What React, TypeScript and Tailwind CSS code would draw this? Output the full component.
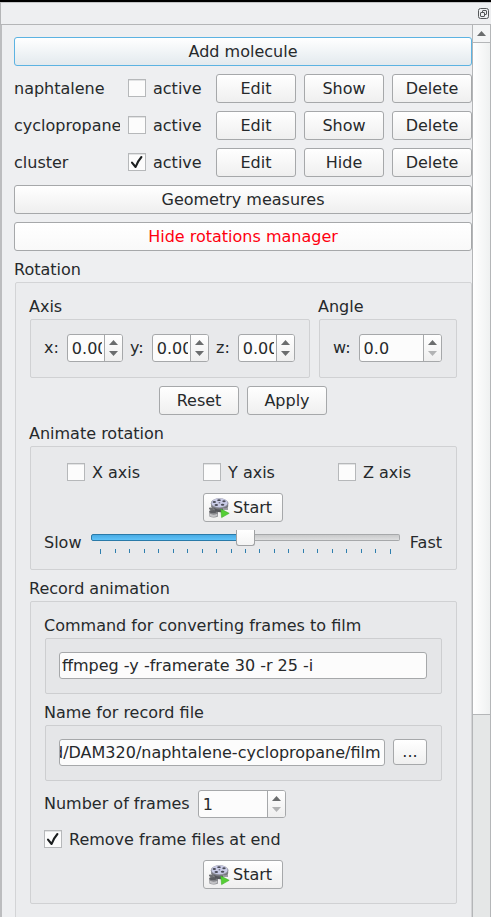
import { useId, useLayoutEffect, useRef, useState } from "react";
import type { ReactNode } from "react";

const buttonBase =
  "flex h-[29px] items-center justify-center rounded-[3px] border bg-linear-to-b text-base leading-5";
const buttonPlain = "border-[#a6a8aa] from-white to-[#efefef]";

function Button({ children, className = "w-20" }: { children: ReactNode; className?: string }) {
  return (
    <button type="button" className={`${buttonBase} ${buttonPlain} ${className}`}>
      {children}
    </button>
  );
}

const frameTones = {
  outer: "bg-[#ebecee] border-[#d3d4d6]",
  middle: "bg-[#e8e9eb] border-[#d0d1d3]",
  inner: "bg-[#e5e6e8] border-[#cdced0]",
};

function Group({
  title,
  tone,
  className = "",
  children,
}: {
  title: string;
  tone: keyof typeof frameTones;
  className?: string;
  children: ReactNode;
}) {
  const id = useId();
  return (
    <div role="group" aria-labelledby={id} className={className}>
      <div id={id} className="h-[23px] leading-[22px]">
        {title}
      </div>
      <div
        className={`ml-px flex flex-col gap-2 rounded-[2px] border pt-[13px] pr-3.5 pb-3.5 pl-[13px] ${frameTones[tone]}`}
      >
        {children}
      </div>
    </div>
  );
}

function Check({
  label,
  defaultChecked = false,
  className = "",
}: {
  label: string;
  defaultChecked?: boolean;
  className?: string;
}) {
  return (
    <label className={`flex items-center gap-[7px] ${className}`}>
      <span className="mb-px grid size-[18px] shrink-0">
        <input
          type="checkbox"
          defaultChecked={defaultChecked}
          className="peer col-start-1 row-start-1 size-[18px] appearance-none border border-[#b6b8ba] bg-[#fcfcfc] shadow-[inset_0_1px_0_#e2e3e4]"
        />
        <svg
          viewBox="0 0 18 18"
          className="pointer-events-none invisible col-start-1 row-start-1 size-[18px] peer-checked:visible"
          aria-hidden="true"
        >
          <path
            d="M4 9.6 L7.6 14 Q9.5 8.5 13.4 4"
            fill="none"
            stroke="#1c1f20"
            strokeWidth="2.1"
            strokeLinecap="round"
            strokeLinejoin="round"
          />
        </svg>
      </span>
      {label}
    </label>
  );
}

function Spin({
  id,
  value,
  label,
  className = "",
  atMinimum = false,
}: {
  id: string;
  value: string;
  label: string;
  className?: string;
  atMinimum?: boolean;
}) {
  return (
    <div className={`flex h-7 overflow-hidden rounded-[3px] border border-[#a6a8aa] bg-[#fcfcfc] ${className}`}>
      <input
        id={id}
        type="text"
        defaultValue={value}
        className="w-0 min-w-0 flex-1 pt-0.5 pr-0.5 pl-1 leading-5 outline-none"
      />
      <div className="flex w-[18px] shrink-0 flex-col border-l border-[#a6a8aa] bg-linear-to-b from-white to-[#efefef]">
        <button type="button" aria-label={`Increase ${label}`} className="flex flex-1 items-end justify-center pb-[3px]">
          <svg viewBox="0 0 9 5" className="h-[5px] w-[9px]" aria-hidden="true">
            <path d="M0 5 L4.5 0 L9 5 Z" fill="#6b6d6e" />
          </svg>
        </button>
        <button
          type="button"
          aria-label={`Decrease ${label}`}
          disabled={atMinimum}
          className="flex flex-1 items-start justify-center pt-[3px]"
        >
          <svg viewBox="0 0 9 5" className="h-[5px] w-[9px]" aria-hidden="true">
            <path d="M0 0 L4.5 5 L9 0 Z" fill={atMinimum ? "#b2b3b4" : "#6b6d6e"} />
          </svg>
        </button>
      </div>
    </div>
  );
}

function LabelledSpin({ id, text, value, atMinimum }: { id: string; text: string; value: string; atMinimum?: boolean }) {
  return (
    <div className="flex flex-1 items-center gap-2">
      <label htmlFor={id}>{text}</label>
      <Spin id={id} value={value} label={text} atMinimum={atMinimum} className="flex-1" />
    </div>
  );
}

function FilmIcon() {
  return (
    <svg viewBox="0 0 22 22" className="size-[22px] shrink-0" aria-hidden="true">
      <path d="M1.2 14.5 Q1.5 12.8 5 12.8 L10 13.4 V19.6 Q6 21.4 1.4 19.6 Z" fill="#85868a" />
      <ellipse cx="5" cy="14.6" rx="3.6" ry="1.5" fill="#5c5d62" />
      <path d="M1.6 16.6 Q5 18.6 9.4 16.8 V19 Q5 20.8 1.6 19 Z" fill="#c2c2c5" />
      <path d="M3.2 6 V10 Q5 13.6 12 13.6 Q20 13.6 20.2 9 V5 Z" fill="#77787e" />
      <path d="M6 11 Q11 13.4 15 12 L15 15 Q11 16 7 14 Z" fill="#55565b" />
      <path d="M1 10.8 Q4 9.5 6.4 12.2 L4.4 13.4 Q2 13.4 1 12 Z" fill="#6d6e72" />
      <path d="M15 11 Q19 12 20 10 V13 H15 Z" fill="#9c9da3" />
      <ellipse cx="11.5" cy="6.2" rx="8.7" ry="4.9" fill="#9495a3" />
      <ellipse cx="11.5" cy="5.9" rx="8" ry="4.3" fill="#c9cbe6" />
      <g fill="#4b4c58">
        <ellipse cx="11" cy="3.2" rx="1.8" ry="0.9" />
        <ellipse cx="6.3" cy="4.9" rx="1.7" ry="1" />
        <ellipse cx="16" cy="4.3" rx="1.7" ry="1" />
        <ellipse cx="8.3" cy="8.1" rx="1.8" ry="1" />
        <ellipse cx="14.6" cy="7.8" rx="1.8" ry="1" />
        <ellipse cx="11.4" cy="5.8" rx="0.9" ry="0.5" />
      </g>
      <path d="M12.8 12 L21.2 16.3 L13.6 20.6 Z" fill="#55cf35" stroke="#3fae2a" strokeWidth="0.6" />
    </svg>
  );
}

function StartButton() {
  return (
    <button
      type="button"
      className={`${buttonBase} ${buttonPlain} w-20 self-center`}
    >
      <span className="flex w-full items-center gap-[3px] pl-1">
        <FilmIcon />
        Start
      </span>
    </button>
  );
}

const ticks = Array.from({ length: 21 }, (_, i) => i);

function SpeedSlider() {
  const [speed, setSpeed] = useState(10);
  return (
    <div className="flex h-[25px] flex-1 flex-col">
      <div className="relative h-4">
        <div className="mt-1 flex h-[7px]">
          <div
            className="rounded-l-[2px] border border-[#2a7aa8] bg-linear-to-b from-[#49abe4] to-[#5fc3f8]"
            style={{ width: `${speed * 5}%` }}
          />
          <div className="flex-1 rounded-r-[2px] border border-l-0 border-[#a6a8aa] bg-linear-to-b from-[#c9cacb] to-[#dedfe0]" />
        </div>
        <input
          type="range"
          aria-label="Rotation speed"
          min={0}
          max={20}
          value={speed}
          onChange={(e) => setSpeed(Number(e.target.value))}
          className="absolute inset-0 h-4 w-full appearance-none bg-transparent [&::-webkit-slider-thumb]:h-4 [&::-webkit-slider-thumb]:w-[19px] [&::-webkit-slider-thumb]:appearance-none [&::-webkit-slider-thumb]:rounded-b-[3px] [&::-webkit-slider-thumb]:border [&::-webkit-slider-thumb]:border-t-0 [&::-webkit-slider-thumb]:border-[#a0a2a4] [&::-webkit-slider-thumb]:bg-linear-to-b [&::-webkit-slider-thumb]:from-white [&::-webkit-slider-thumb]:to-[#f4f4f4]"
        />
      </div>
      <div className="mt-[3px] flex justify-between px-[9px]">
        {ticks.map((t) => (
          <span key={t} className="h-1 w-px bg-[#2f7fae] first:h-[5px] last:h-[5px]" />
        ))}
      </div>
    </div>
  );
}

const molecules = [
  { name: "naphtalene", active: false, toggle: "Show" },
  { name: "cyclopropane", active: false, toggle: "Show" },
  { name: "cluster", active: true, toggle: "Hide" },
];

const textBox = "h-[27px] min-w-0 flex-1 rounded-[3px] border border-[#a6a8aa] bg-[#fcfcfc] leading-5 outline-none";

export default function App() {
  const fileRef = useRef<HTMLInputElement>(null);

  // Keep the end of a long path in view.
  useLayoutEffect(() => {
    const box = fileRef.current;
    if (box) box.scrollLeft = box.scrollWidth;
  }, []);

  return (
    <div className="flex h-screen flex-col overflow-hidden border-t-2 border-black bg-[#eeeff1] font-['DejaVu_Sans',sans-serif] text-base leading-5 text-[#26292b]">
      <header className="flex h-[23px] shrink-0 items-center justify-end border-t border-b border-l border-[#b4b5b7] border-t-[#c4c5c7] pr-0.5">
        <button type="button" aria-label="Float panel" className="mb-px">
          <svg viewBox="0 0 11 11" className="size-[11px]" fill="none" stroke="#55585a" aria-hidden="true">
            <rect x="0.5" y="0.5" width="10" height="10" rx="2" />
            <path d="M4.5 4 V3 Q4.5 2.5 5 2.5 H8 Q8.5 2.5 8.5 3 V6 Q8.5 6.5 8 6.5 H7" />
            <rect x="2.5" y="4.5" width="4" height="4" rx="0.5" />
          </svg>
        </button>
      </header>

      <div className="flex min-h-0 flex-1 border-l-2 border-[#bcbdbf]">
        <main className="flex min-w-0 flex-1 flex-col gap-2 overflow-hidden pt-3 pl-3">
          <button
            type="button"
            className={`${buttonBase} shrink-0 border-[#5cb3e2] from-white to-[#e3eaee]`}
          >
            Add molecule
          </button>

          {molecules.map((m) => (
            <div key={m.name} className="flex shrink-0 items-center gap-2">
              <span className="w-0 flex-1 overflow-hidden whitespace-nowrap">{m.name}</span>
              <Check label="active" defaultChecked={m.active} className="w-20" />
              <Button>Edit</Button>
              <Button>{m.toggle}</Button>
              <Button>Delete</Button>
            </div>
          ))}

          <Button className="shrink-0">Geometry measures</Button>
          <button
            type="button"
            className={`${buttonBase} shrink-0 border-[#a6a8aa] from-white to-[#f9f9f9] text-[#ff0010]`}
          >
            Hide rotations manager
          </button>

          <Group title="Rotation" tone="outer" className="shrink-0">
            <div className="flex gap-2">
              <Group title="Axis" tone="middle" className="flex-1">
                <div className="flex h-[30px] items-center gap-[7px]">
                  <LabelledSpin id="axis-x" text="x:" value="0.00" />
                  <LabelledSpin id="axis-y" text="y:" value="0.00" />
                  <LabelledSpin id="axis-z" text="z:" value="0.00" />
                </div>
              </Group>
              <Group title="Angle" tone="middle" className="w-[139px]">
                <div className="flex h-[30px] items-center">
                  <LabelledSpin id="angle-w" text="w:" value="0.0" atMinimum />
                </div>
              </Group>
            </div>

            <div className="flex justify-center gap-2">
              <Button>Reset</Button>
              <Button>Apply</Button>
            </div>

            <Group title="Animate rotation" tone="middle">
              <div className="flex h-[25px] items-center justify-between pr-[31px] pl-[23px]">
                <Check label="X axis" />
                <Check label="Y axis" />
                <Check label="Z axis" />
              </div>
              <StartButton />
              <div className="flex items-center gap-2.5">
                <span>Slow</span>
                <SpeedSlider />
                <span>Fast</span>
              </div>
            </Group>

            <Group title="Record animation" tone="middle">
              <Group title="Command for converting frames to film" tone="inner">
                <div className="flex">
                  <input
                    type="text"
                    aria-label="Command for converting frames to film"
                    defaultValue="ffmpeg -y -framerate 30 -r 25 -i"
                    className={`${textBox} px-0.5`}
                  />
                </div>
              </Group>
              <Group title="Name for record file" tone="inner">
                <div className="flex gap-2">
                  <input
                    ref={fileRef}
                    type="text"
                    aria-label="Name for record file"
                    defaultValue="d/DAM320/naphtalene-cyclopropane/film"
                    className={`${textBox} pr-[3px]`}
                  />
                  <button
                    type="button"
                    aria-label="Browse"
                    className="h-[26px] w-[34px] rounded-[3px] border border-[#a6a8aa] bg-linear-to-b from-white to-[#efefef]"
                  >
                    ...
                  </button>
                </div>
              </Group>
              <div className="flex h-[30px] items-center gap-2">
                <label htmlFor="frames" className="leading-[22px]">
                  Number of frames
                </label>
                <Spin id="frames" value="1" label="number of frames" className="w-[88px]" atMinimum />
              </div>
              <Check label="Remove frame files at end" defaultChecked className="h-[25px]" />
              <StartButton />
            </Group>
          </Group>
        </main>

        <div className="flex w-[19px] shrink-0 flex-col border-x border-[#b4b6b8] bg-[#e5e7e7]">
          <button
            type="button"
            aria-label="Scroll up"
            className="flex h-[18px] shrink-0 items-center justify-center border-b border-[#b4b6b8] bg-[#f4f5f6]"
          >
            <svg viewBox="0 0 9 5" className="h-[5px] w-[9px]" aria-hidden="true">
              <path d="M0 5 L4.5 0 L9 5 Z" fill="#6b6d6e" />
            </svg>
          </button>
          <div className="flex-[672] border-b border-[#b4b6b8] bg-linear-to-r from-white to-[#eff1f1]" />
          <div className="flex-[202]" />
        </div>
      </div>
    </div>
  );
}
